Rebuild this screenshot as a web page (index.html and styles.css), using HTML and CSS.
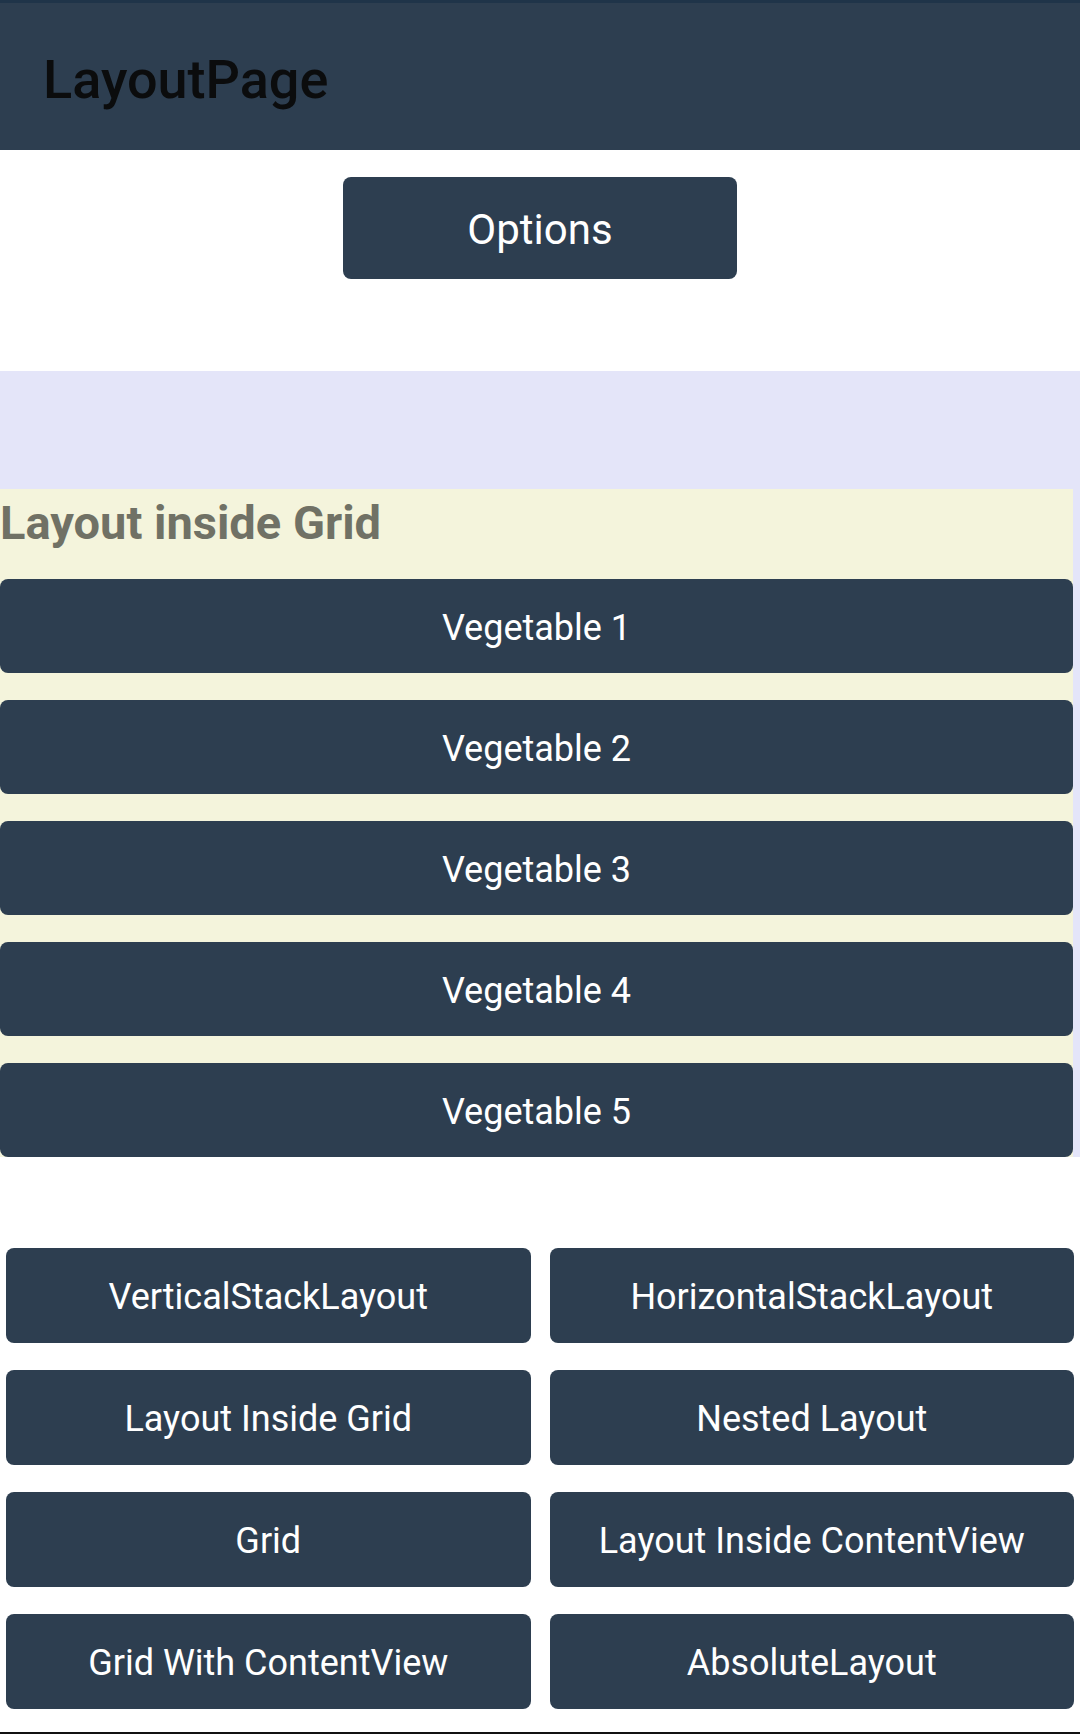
FILE: index.html
```html
<!DOCTYPE html>
<html lang="en">
<head>
<meta charset="utf-8">
<title>LayoutPage</title>
<link rel="stylesheet" href="styles.css">
</head>
<body>
<header class="appbar">
  <h1 class="appbar-title">LayoutPage</h1>
</header>
<main class="page">
  <div class="options-row">
    <button class="btn btn-options">Options</button>
  </div>
  <section class="outer">
    <div class="inner">
      <h2 class="inner-title">Layout inside Grid</h2>
      <div class="veg-list">
        <button class="btn btn-veg">Vegetable 1</button>
        <button class="btn btn-veg">Vegetable 2</button>
        <button class="btn btn-veg">Vegetable 3</button>
        <button class="btn btn-veg">Vegetable 4</button>
        <button class="btn btn-veg">Vegetable 5</button>
      </div>
    </div>
  </section>
  <nav class="nav-grid">
    <button class="btn btn-nav">VerticalStackLayout</button>
    <button class="btn btn-nav">HorizontalStackLayout</button>
    <button class="btn btn-nav">Layout Inside Grid</button>
    <button class="btn btn-nav">Nested Layout</button>
    <button class="btn btn-nav">Grid</button>
    <button class="btn btn-nav">Layout Inside ContentView</button>
    <button class="btn btn-nav">Grid With ContentView</button>
    <button class="btn btn-nav">AbsoluteLayout</button>
  </nav>
  <div class="bottom-edge"></div>
</main>
</body>
</html>
```
FILE: styles.css
```css
* {
  box-sizing: border-box;
}

html, body {
  margin: 0;
  padding: 0;
  background: #ffffff;
}

body {
  width: 1080px;
  font-family: Roboto, "Noto Sans", "Liberation Sans", sans-serif;
}

.appbar {
  height: 150px;
  background: #2d3e50;
  border-top: 3px solid #1f3449;
  padding: 45px 0 0 43px;
}

.appbar-title {
  margin: 0;
  font-size: 54px;
  font-weight: 500;
  line-height: 63px;
  color: #0b0c0d;
}

.btn {
  display: flex;
  align-items: center;
  justify-content: center;
  border: none;
  margin: 0;
  padding: 3px 0 0;
  background: #2d3e50;
  color: #ffffff;
  font-family: Roboto, "Noto Sans", "Liberation Sans", sans-serif;
  font-weight: 400;
  border-radius: 8px;
}

.options-row {
  display: flex;
  justify-content: center;
  padding-top: 27px;
}

.btn-options {
  width: 394px;
  height: 102px;
  font-size: 42px;
}

.outer {
  margin-top: 92px;
  background: #e4e5f9;
  padding: 118px 7px 0 0;
}

.inner {
  background: #f4f4dc;
  padding-top: 6px;
}

.inner-title {
  margin: 0;
  font-size: 47px;
  font-weight: 700;
  line-height: 56px;
  color: #707165;
}

.veg-list {
  display: flex;
  flex-direction: column;
  gap: 27px;
  padding-top: 28px;
}

.btn-veg {
  width: 100%;
  height: 94px;
  font-size: 36px;
}

.nav-grid {
  display: grid;
  grid-template-columns: 1fr 1fr;
  grid-auto-rows: 95px;
  column-gap: 19px;
  row-gap: 27px;
  padding: 0 6px;
  margin-top: 91px;
}

.btn-nav {
  width: 100%;
  height: 100%;
  font-size: 36px;
}

.bottom-edge {
  margin-top: 23px;
  height: 2px;
  background: #111111;
}
```
